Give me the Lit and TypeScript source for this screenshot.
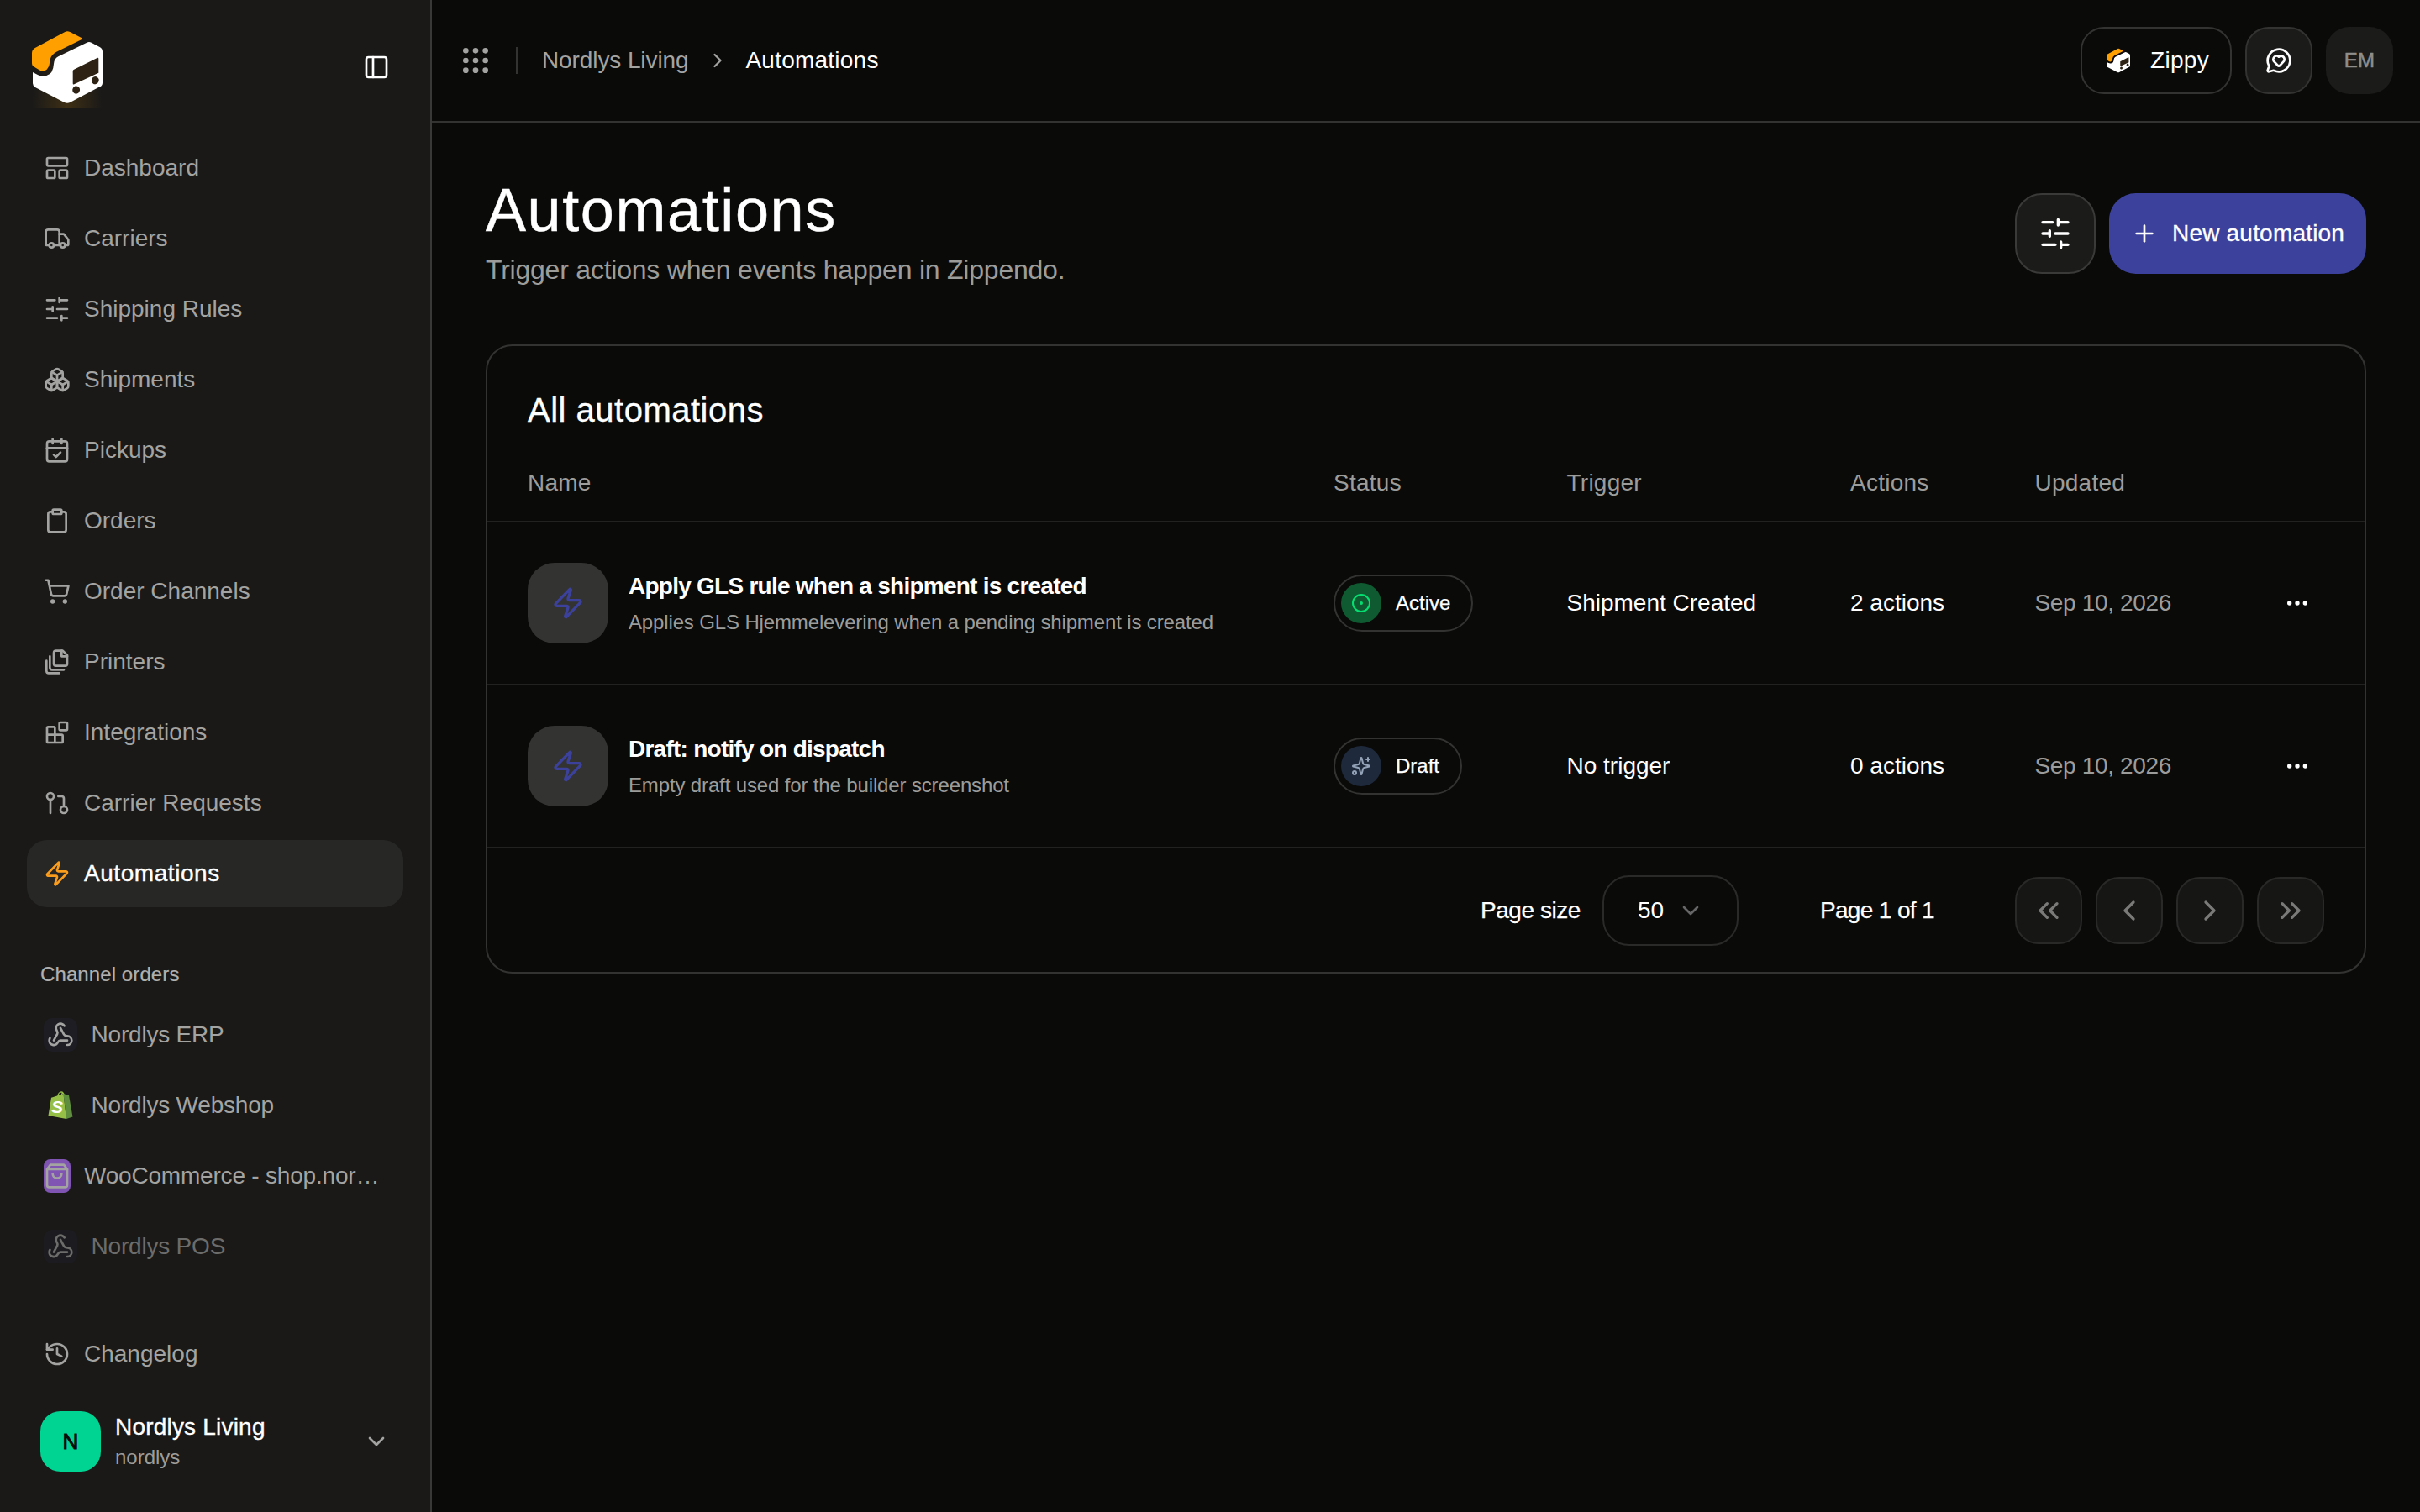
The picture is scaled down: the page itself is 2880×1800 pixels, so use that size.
import { LitElement, html, css, svg } from "lit";
import { customElement } from "lit/decorators.js";

const P = {
  panel: svg`<rect x="3" y="3" width="18" height="18" rx="2"/><path d="M9 3v18"/>`,
  dashboard: svg`<rect x="3" y="3" width="18" height="7" rx="1"/><rect x="3" y="14" width="7" height="7" rx="1"/><rect x="14" y="14" width="7" height="7" rx="1"/>`,
  truck: svg`<path d="M14 18V6a2 2 0 0 0-2-2H4a2 2 0 0 0-2 2v11a1 1 0 0 0 1 1h2"/><path d="M15 18H9"/><path d="M19 18h2a1 1 0 0 0 1-1v-3.65a1 1 0 0 0-.22-.624l-3.48-4.35A1 1 0 0 0 17.52 8H14"/><circle cx="17" cy="18" r="2"/><circle cx="7" cy="18" r="2"/>`,
  sliders: svg`<path d="M21 4h-7M10 4H3M21 12h-9M8 12H3M21 20h-5M12 20H3M14 2v4M8 10v4M16 18v4"/>`,
  boxes: svg`<path d="M2.97 12.92A2 2 0 0 0 2 14.63v3.24a2 2 0 0 0 .97 1.71l3 1.8a2 2 0 0 0 2.06 0L12 19v-5.5l-5-3-4.03 2.42Z"/><path d="m7 16.5-4.74-2.85"/><path d="m7 16.5 5-3"/><path d="M7 16.5v5.17"/><path d="M12 13.5V19l3.97 2.38a2 2 0 0 0 2.06 0l3-1.8a2 2 0 0 0 .97-1.71v-3.24a2 2 0 0 0-.97-1.71L17 10.5l-5 3Z"/><path d="m17 16.5-5-3"/><path d="m17 16.5 4.74-2.85"/><path d="M17 16.5v5.17"/><path d="M7.97 4.42A2 2 0 0 0 7 6.13v4.37l5 3 5-3V6.13a2 2 0 0 0-.97-1.71l-3-1.8a2 2 0 0 0-2.06 0l-3 1.8Z"/><path d="M12 8 7.26 5.15"/><path d="m12 8 4.74-2.85"/><path d="M12 13.5V8"/>`,
  calendar: svg`<path d="M8 2v4"/><path d="M16 2v4"/><rect x="3" y="4" width="18" height="18" rx="2"/><path d="M3 10h18"/><path d="m9 16 2 2 4-4"/>`,
  clipboard: svg`<rect x="8" y="2" width="8" height="4" rx="1"/><path d="M16 4h2a2 2 0 0 1 2 2v14a2 2 0 0 1-2 2H6a2 2 0 0 1-2-2V6a2 2 0 0 1 2-2h2"/>`,
  cart: svg`<circle cx="8" cy="21" r="1"/><circle cx="19" cy="21" r="1"/><path d="M2.05 2.05h2l2.66 12.42a2 2 0 0 0 2 1.58h9.78a2 2 0 0 0 1.95-1.57l1.65-7.43H5.12"/>`,
  files: svg`<path d="M9 12V4a2 2 0 0 1 2-2h6l4 4v8a1.500 1.500 0 0 1-1.500 1.500H11a2 2 0 0 1-2-2Z"/><path d="M16 2v5h5"/><path d="M5.500 7v10a2 2 0 0 0 2 2H18"/><path d="M2.500 11v9a2 2 0 0 0 2 2H14"/>`,
  blocks: svg`<rect x="14" y="3" width="7" height="7" rx="1"/><path d="M10 21V8a1 1 0 0 0-1-1H4a1 1 0 0 0-1 1v12a1 1 0 0 0 1 1h12a1 1 0 0 0 1-1v-5a1 1 0 0 0-1-1H3"/>`,
  pull: svg`<circle cx="18" cy="18" r="3"/><circle cx="6" cy="6" r="3"/><path d="M13 6h3a2 2 0 0 1 2 2v7"/><path d="M6 9v12"/>`,
  zap: svg`<path d="M4 14a1 1 0 0 1-.78-1.63l9.9-10.2a.5.5 0 0 1 .86.46l-1.92 6.02A1 1 0 0 0 13 10h7a1 1 0 0 1 .78 1.63l-9.9 10.2a.5.5 0 0 1-.86-.46l1.92-6.02A1 1 0 0 0 11 14z"/>`,
  webhook: svg`<path d="M18 16.98h-5.99c-1.1 0-1.95.94-2.48 1.9A4 4 0 0 1 2 17c.01-.7.2-1.4.57-2"/><path d="m6 17 3.13-5.78c.53-.97.1-2.18-.5-3.1a4 4 0 1 1 6.89-4.06"/><path d="m12 6 3.13 5.73C15.66 12.7 16.9 13 18 13a4 4 0 0 1 0 8"/>`,
  bag: svg`<path d="M6 2 3 6v14a2 2 0 0 0 2 2h14a2 2 0 0 0 2-2V6l-3-4Z"/><path d="M3 6h18"/><path d="M16 10a4 4 0 0 1-8 0"/>`,
  history: svg`<path d="M3 12a9 9 0 1 0 9-9 9.75 9.75 0 0 0-6.74 2.74L3 8"/><path d="M3 3v5h5"/><path d="M12 7v5l4 2"/>`,
  down: svg`<path d="m6 9 6 6 6-6"/>`,
  right: svg`<path d="m9 18 6-6-6-6"/>`,
  left: svg`<path d="m15 18-6-6 6-6"/>`,
  lefts: svg`<path d="m11 17-5-5 5-5"/><path d="m18 17-5-5 5-5"/>`,
  rights: svg`<path d="m6 17 5-5-5-5"/><path d="m13 17 5-5-5-5"/>`,
  grip: svg`<circle cx="12" cy="5" r="1"/><circle cx="19" cy="5" r="1"/><circle cx="5" cy="5" r="1"/><circle cx="12" cy="12" r="1"/><circle cx="19" cy="12" r="1"/><circle cx="5" cy="12" r="1"/><circle cx="12" cy="19" r="1"/><circle cx="19" cy="19" r="1"/><circle cx="5" cy="19" r="1"/>`,
  heart: svg`<path d="M2.992 16.342a2 2 0 0 1 .094 1.167l-1.065 3.29a1 1 0 0 0 1.236 1.168l3.413-.998a2 2 0 0 1 1.099.092 10 10 0 1 0-4.777-4.719"/><path d="M7.828 13.07A3 3 0 0 1 12 8.764a3 3 0 0 1 5.004 2.224 3 3 0 0 1-.832 2.083l-3.447 3.62a1 1 0 0 1-1.45-.001z"/>`,
  plus: svg`<path d="M5 12h14"/><path d="M12 5v14"/>`,
  dot: svg`<circle cx="12" cy="12" r="10"/><circle cx="12" cy="12" r="1"/>`,
  sparkles: svg`<path d="M9.937 15.5A2 2 0 0 0 8.5 14.063l-6.135-1.582a.5.5 0 0 1 0-.962L8.5 9.936A2 2 0 0 0 9.937 8.5l1.582-6.135a.5.5 0 0 1 .963 0L14.063 8.5A2 2 0 0 0 15.5 9.937l6.135 1.581a.5.5 0 0 1 0 .964L15.5 14.063a2 2 0 0 0-1.437 1.437l-1.582 6.135a.5.5 0 0 1-.963 0z"/><path d="M20 2v4"/><path d="M22 4h-4"/><circle cx="4" cy="20" r="2"/>`,
  ellipsis: svg`<circle cx="12" cy="12" r="1"/><circle cx="19" cy="12" r="1"/><circle cx="5" cy="12" r="1"/>`,
};

const icon = (p: unknown, cls = "i32") =>
  html`<svg class="ic ${cls}" viewBox="0 0 24 24" fill="none" stroke="currentColor" stroke-width="2" stroke-linecap="round" stroke-linejoin="round">${p}</svg>`;

const logo = (cls: string) => html`<svg class=${cls} viewBox="36 36 288 288">
  <path fill="#ffa000" d="M172 54Q180 50 190 54L232 76Q236 79 230 82L140 126Q120 138 118 158Q116 186 100 192Q90 196 80 190L58 176Q54 173 54 166L54 130Q54 118 64 112Z"/>
  <path fill="#fff" d="M250 92Q258 88 266 92L296 108Q306 114 306 124L306 236Q306 246 296 250L190 306Q180 311 170 306L66 252Q57 247 57 238L57 198L76 208Q90 214 106 210Q130 204 132 168Q133 150 148 142Z"/>
  <path fill="#2d2213" d="M204 188L287 147Q292 145 292 150L292 200L205 241Q200 243 200 238L200 194Q200 190 204 188Z"/>
  <ellipse fill="#2d2213" cx="212" cy="261" rx="13" ry="14" transform="rotate(30 212 261)"/>
  <ellipse fill="#2d2213" cx="280" cy="227" rx="13" ry="14" transform="rotate(30 280 227)"/>
</svg>`;

const shopify = html`<svg class="chan" viewBox="0 0 40 40">
  <path fill="none" stroke="#95bf47" stroke-width="1.3" d="M17 9c0-3 2-5 4-5s3 2 3.500 5M21 9c0-2 1-4 2-4"/>
  <path fill="#95bf47" d="M13 9.500L23.500 6L27 36L5.500 32L9 10.800Z"/>
  <path fill="#5e8e3e" d="M23.500 6L30 8L34.500 33.500L27 36Z"/>
  <text x="16" y="29" class="shop-s">S</text>
</svg>`;

const NAV: [string, unknown][] = [
  ["Dashboard", P.dashboard], ["Carriers", P.truck], ["Shipping Rules", P.sliders], ["Shipments", P.boxes],
  ["Pickups", P.calendar], ["Orders", P.clipboard], ["Order Channels", P.cart], ["Printers", P.files],
  ["Integrations", P.blocks], ["Carrier Requests", P.pull],
];

const ROWS = [
  { t: "Apply GLS rule when a shipment is created", s: "Applies GLS Hjemmelevering when a pending shipment is created", st: "Active", tr: "Shipment Created", a: "2 actions" },
  { t: "Draft: notify on dispatch", s: "Empty draft used for the builder screenshot", st: "Draft", tr: "No trigger", a: "0 actions" },
];

@customElement("app-root")
export class AppRoot extends LitElement {
  static styles = css`
    :host { display: block; width: 2880px; height: 1800px; background: #0a0a09; color: #fff; overflow: hidden;
      font-family: "Liberation Sans", Arial, sans-serif; font-size: 28px; letter-spacing: 0; }
    * { box-sizing: border-box; }
    .ic { display: block; flex: none; }
    .i24 { width: 24px; height: 24px; } .i28 { width: 28px; height: 28px; }
    .i32 { width: 32px; height: 32px; } .i40 { width: 40px; height: 40px; }
    .page { display: flex; width: 2880px; height: 1800px; }
    .side { width: 514px; flex: none; background: #1a1918; border-right: 2px solid #393937; display: flex; flex-direction: column; padding: 32px 32px 48px; }
    .side-top { display: flex; align-items: center; justify-content: space-between; height: 96px; margin-bottom: 32px; }
    .logo-box { width: 96px; height: 96px; background: radial-gradient(ellipse at 50% 100%, rgba(255,165,0,.16), rgba(255,165,0,0) 62%); }
    .logo-box svg { display: block; width: 96px; height: 96px; }
    .panel { color: #fff; width: 64px; display: flex; justify-content: center; }
    .nav { display: flex; flex-direction: column; gap: 4px; }
    .item { height: 80px; display: flex; align-items: center; gap: 16px; padding: 0 20px; border-radius: 24px; color: #a3a3a1; }
    .item.active { background: #272726; color: #fff; -webkit-text-stroke: 0.35px #fff; letter-spacing: .55px; }
    .item.active .ic { color: #fb9d1c; }
    .label { margin: 64px 0 16px 16px; font-size: 24px; line-height: 32px; color: #b0b0ae; -webkit-text-stroke: 0.2px #b0b0ae; letter-spacing: .1px; }
    .chan { display: block; width: 40px; height: 40px; flex: none; }
    .chan-ic { width: 40px; height: 40px; flex: none; border-radius: 10px; background: #1e1d24; display: flex; align-items: center; justify-content: center; }
    .chan-row { gap: 16.5px; }
    .woo-row { gap: 16px; }
    .woo { width: 32px; height: 40px; flex: none; border-radius: 8px; background: #7f54b3; display: flex; align-items: center; justify-content: center; }
    .txt { min-width: 0; flex: 1; white-space: nowrap; overflow: hidden; text-overflow: ellipsis; letter-spacing: -0.2px; }
    .dim { opacity: .6; }
    .shop-s { fill: #fff; font: italic 700 21px "Liberation Sans", sans-serif; text-anchor: middle; }
    .bottom { margin-top: auto; }
    .org { display: flex; align-items: center; margin-top: 28px; padding-left: 16px; height: 72px; }
    .avatar { width: 72px; height: 72px; border-radius: 24px; background: #00d492; color: #0a0a09; display: flex; align-items: center; justify-content: center; font-size: 26px; -webkit-text-stroke: 1px #0a0a09; flex: none; }
    .org-text { margin-left: 17px; flex: 1; }
    .org-name { font-size: 28px; line-height: 38px; -webkit-text-stroke: 0.35px #fff; letter-spacing: .2px; }
    .org-sub { font-size: 24px; line-height: 34px; color: #9c9c9a; }
    .org .ic { color: #a3a3a1; transform: translateX(-16px); }

    .main { flex: 1; min-width: 0; display: flex; flex-direction: column; }
    .top { height: 146px; flex: none; border-bottom: 2px solid #333331; display: flex; align-items: center; padding: 0 32px; }
    .grip { color: #a3a3a1; }
    .vr { width: 2px; height: 32px; background: #333331; margin: 0 29px 0 28px; }
    .crumb { color: #a3a3a1; letter-spacing: -0.1px; }
    .crumb-cur { color: #fff; letter-spacing: .23px; }
    .sep { color: #a3a3a1; margin: 0 19px 0 21px; }
    .top-right { margin-left: auto; display: flex; gap: 16px; align-items: center; }
    .zippy { height: 80px; width: 180px; border: 2px solid #333331; border-radius: 28px; display: flex; align-items: center; padding-left: 27px; gap: 22px; letter-spacing: .3px; }
    .zippy svg.zlogo { width: 32px; height: 32px; display: block; }
    .sq { width: 80px; height: 80px; border-radius: 28px; display: flex; align-items: center; justify-content: center; background: #1b1b1a; }
    .sq.bord { border: 2px solid #333331; }
    .em { color: #8e8e8c; font-size: 24px; -webkit-text-stroke: 0.5px #8e8e8c; letter-spacing: .2px; }

    .content { padding: 64px 64px 0; }
    .head { display: flex; justify-content: space-between; align-items: flex-start; margin-bottom: 69px; }
    h1 { margin: 0; font-weight: 400; font-size: 72px; line-height: 80px; letter-spacing: 1.6px; -webkit-text-stroke: 0.5px #fff; }
    .sub { margin-top: 11px; font-size: 32px; line-height: 40px; color: #9c9c9a; letter-spacing: -0.22px; }
    .actions { display: flex; gap: 16px; margin-top: 20px; }
    .filter { width: 96px; height: 96px; border-radius: 32px; border: 2px solid #3a3a38; background: #1b1b1a; display: flex; align-items: center; justify-content: center; }
    .new { height: 96px; width: 306px; border-radius: 32px; background: #3c429c; display: flex; align-items: center; padding-left: 26px; gap: 17px; -webkit-text-stroke: 0.3px #fff; letter-spacing: .2px; }

    .card { border: 2px solid #333331; border-radius: 32px; }
    .card-title { padding: 48px 48px 0; font-size: 40px; line-height: 56px; letter-spacing: .5px; -webkit-text-stroke: 0.3px #fff; }
    .row { display: grid; grid-template-columns: 959px 277.5px 337.5px 219.5px 1fr auto; padding-left: 48px; align-items: center; border-bottom: 2px solid #222221; }
    .row.hd { padding-top: 39px; padding-bottom: 25px; line-height: 40px; color: #9c9c9a; letter-spacing: .25px; }
    .row.body { height: 194px; }
    .name { display: flex; align-items: center; gap: 24px; }
    .tile { width: 96px; height: 96px; border-radius: 32px; background: #333331; color: #3c429c; display: flex; align-items: center; justify-content: center; flex: none; }
    .t1 { font-weight: 700; font-size: 28px; line-height: 38px; letter-spacing: -0.75px; }
    .t2 { margin-top: 8px; font-size: 24px; line-height: 32px; color: #9c9c9a; letter-spacing: -0.14px; }
    .pill { display: inline-flex; align-items: center; height: 68px; border: 2px solid #333331; border-radius: 34px; padding: 0 25px 0 7px; gap: 17px; font-size: 24px; -webkit-text-stroke: 0.25px #fff; }
    .pill-ic { width: 48px; height: 48px; border-radius: 50%; display: flex; align-items: center; justify-content: center; }
    .pill-ic.on { background: #0f5a30; color: #05df72; }
    .pill-ic.off { background: #1e293b; color: #94a3b8; }
    .pill-wrap { display: flex; }
    .date { color: #9c9c9a; letter-spacing: -0.35px; }
    .dots { margin-right: 64px; color: #fff; }
    .foot { height: 147px; display: flex; align-items: center; padding-right: 48px; justify-content: flex-end; }
    .foot-t { -webkit-text-stroke: 0.25px #fff; letter-spacing: -0.45px; }
    .foot-p { -webkit-text-stroke: 0.25px #fff; letter-spacing: -0.65px; }
    .select { width: 162px; height: 84px; margin-left: 26px; margin-right: 97px; border: 2px solid #2a2a29; border-radius: 32px; display: flex; align-items: center; padding-left: 40px; gap: 16px; }
    .select .ic { color: #666; }
    .pager { display: flex; gap: 16px; margin-left: 96px; }
    .pg { width: 80px; height: 80px; border-radius: 28px; border: 2px solid #292928; background: #161615; color: #7a7a78; display: flex; align-items: center; justify-content: center; }
  `;

  render() {
    return html`<div class="page">
      <aside class="side">
        <div class="side-top">
          <div class="logo-box">${logo("")}</div>
          <div class="panel">${icon(P.panel)}</div>
        </div>
        <nav class="nav">
          ${NAV.map(([n, p]) => html`<div class="item">${icon(p)}<span>${n}</span></div>`)}
          <div class="item active">${icon(P.zap)}<span>Automations</span></div>
        </nav>
        <div class="label">Channel orders</div>
        <div class="nav">
          <div class="item chan-row"><span class="chan-ic">${icon(P.webhook, "i32")}</span><span class="txt">Nordlys ERP</span></div>
          <div class="item chan-row">${shopify}<span class="txt">Nordlys Webshop</span></div>
          <div class="item woo-row"><span class="woo">${icon(P.bag, "i32")}</span><span class="txt">WooCommerce - shop.nordlys.dk</span></div>
          <div class="item chan-row dim"><span class="chan-ic">${icon(P.webhook, "i32")}</span><span class="txt">Nordlys POS</span></div>
        </div>
        <div class="bottom">
          <div class="item">${icon(P.history)}<span>Changelog</span></div>
          <div class="org">
            <div class="avatar">N</div>
            <div class="org-text"><div class="org-name">Nordlys Living</div><div class="org-sub">nordlys</div></div>
            ${icon(P.down)}
          </div>
        </div>
      </aside>
      <main class="main">
        <header class="top">
          <span class="grip">${icon(P.grip, "i40")}</span>
          <span class="vr"></span>
          <span class="crumb">Nordlys Living</span>
          <span class="sep">${icon(P.right, "i28")}</span>
          <span class="crumb-cur">Automations</span>
          <div class="top-right">
            <div class="zippy">${logo("zlogo")}<span>Zippy</span></div>
            <div class="sq bord">${icon(P.heart)}</div>
            <div class="sq em">EM</div>
          </div>
        </header>
        <section class="content">
          <div class="head">
            <div>
              <h1>Automations</h1>
              <div class="sub">Trigger actions when events happen in Zippendo.</div>
            </div>
            <div class="actions">
              <div class="filter">${icon(P.sliders, "i40")}</div>
              <div class="new">${icon(P.plus)}<span>New automation</span></div>
            </div>
          </div>
          <div class="card">
            <div class="card-title">All automations</div>
            <div class="row hd"><span>Name</span><span>Status</span><span>Trigger</span><span>Actions</span><span>Updated</span></div>
            ${ROWS.map((r) => html`<div class="row body">
              <div class="name">
                <div class="tile">${icon(P.zap, "i40")}</div>
                <div><div class="t1">${r.t}</div><div class="t2">${r.s}</div></div>
              </div>
              <div class="pill-wrap"><div class="pill">
                ${r.st === "Active"
                  ? html`<span class="pill-ic on">${icon(P.dot, "i24")}</span>`
                  : html`<span class="pill-ic off">${icon(P.sparkles, "i24")}</span>`}
                <span>${r.st}</span>
              </div></div>
              <span>${r.tr}</span>
              <span>${r.a}</span>
              <span class="date">Sep 10, 2026</span>
              <span class="dots">${icon(P.ellipsis)}</span>
            </div>`)}
            <div class="foot">
              <span class="foot-t">Page size</span>
              <div class="select"><span>50</span>${icon(P.down)}</div>
              <span class="foot-p">Page 1 of 1</span>
              <div class="pager">
                <div class="pg">${icon(P.lefts, "i40")}</div>
                <div class="pg">${icon(P.left, "i40")}</div>
                <div class="pg">${icon(P.right, "i40")}</div>
                <div class="pg">${icon(P.rights, "i40")}</div>
              </div>
            </div>
          </div>
        </section>
      </main>
    </div>`;
  }
}
